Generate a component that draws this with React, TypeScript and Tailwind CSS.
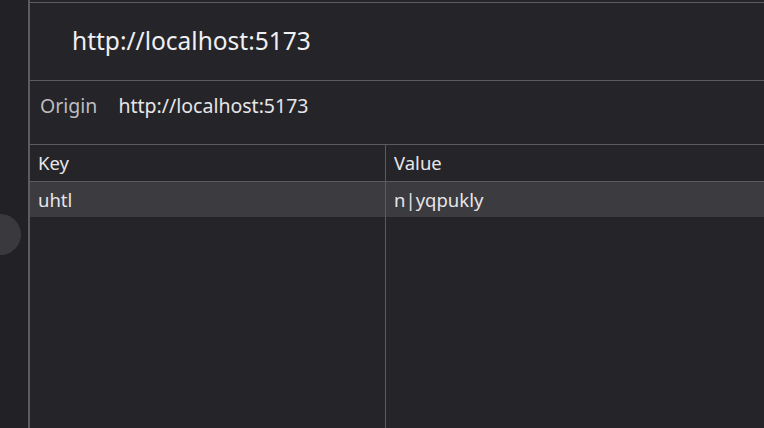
export default function App() {
  return (
    <div
      className="relative flex h-[428px] w-[764px] overflow-hidden bg-[#222226] text-[#e6e6e8]"
      style={{ fontFamily: '"Noto Sans", "Open Sans", sans-serif' }}
    >
      {/* left strip */}
      <div className="w-[28px] shrink-0 bg-[#222226]" />
      <div className="absolute left-[-20px] top-[214px] h-[41px] w-[41px] rounded-full bg-[#3a393e]" />

      <div className="flex min-w-0 flex-1 flex-col border-l-2 border-[#5c5b60] bg-[#252429] pt-[2px]">
        <div className="flex h-[79px] items-center border-y border-[#5c5b60] pl-[42px] text-[24.5px] text-[#f0f0f2]">
          http://localhost:5173
        </div>
        <div className="flex h-[64px] items-start gap-[21px] border-b border-[#5c5b60] pl-[10px] pt-[12px] text-[19.5px] leading-[26px]">
          <span className="text-[#bdbdc1]">Origin</span>
          <span>http://localhost:5173</span>
        </div>
        <div className="flex flex-1 text-[18.5px]">
          <div className="flex w-[356px] flex-col border-r border-[#5c5b60]">
            <div className="flex h-[37px] items-center border-b border-[#5c5b60] pl-[8px]">Key</div>
            <div className="flex h-[35px] items-center bg-[#3c3b40] pl-[8px]">uhtl</div>
          </div>
          <div className="flex flex-1 flex-col">
            <div className="flex h-[37px] items-center border-b border-[#5c5b60] pl-[8px]">Value</div>
            <div className="flex h-[35px] items-center bg-[#3c3b40] pl-[8px]">n|yqpukly</div>
          </div>
        </div>
      </div>
    </div>
  );
}
